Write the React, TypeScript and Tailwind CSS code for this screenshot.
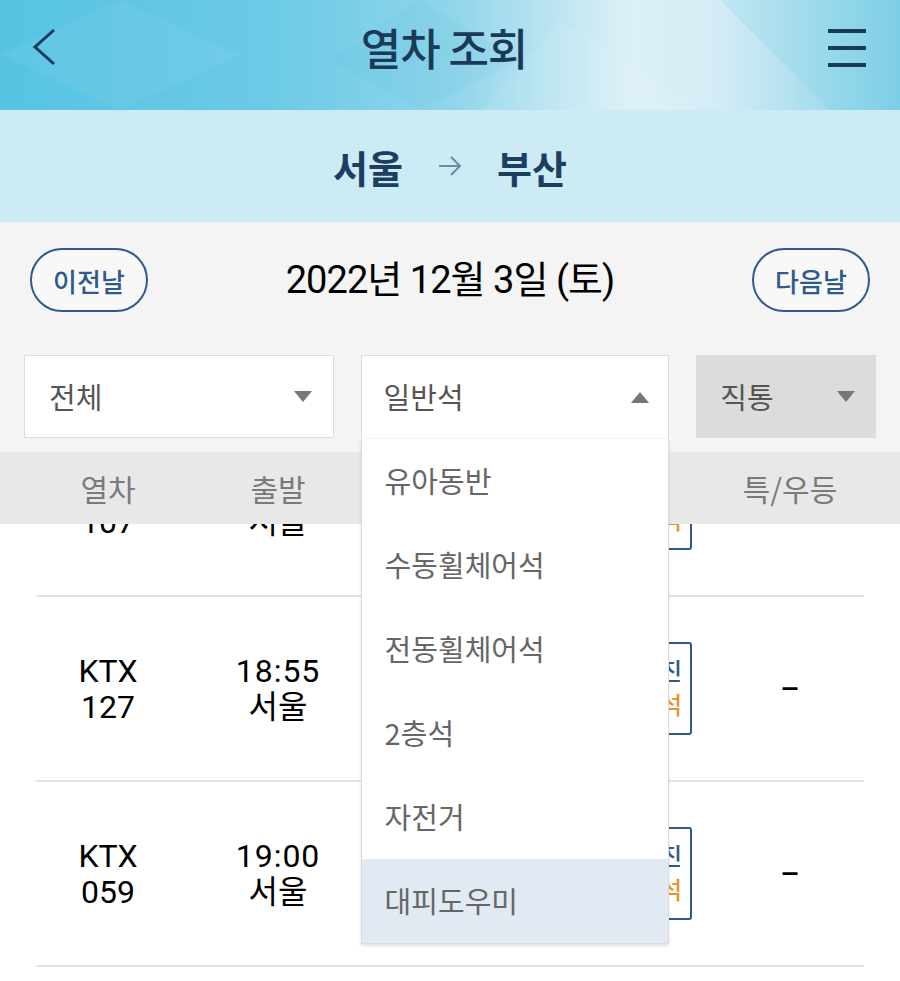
import React from "react";

const Down = ({ up = false }: { up?: boolean }) => (
  <svg width="20" height="13" viewBox="0 0 20 13" className="shrink-0">
    {up ? (
      <polygon points="10,1 19,12 1,12" fill="#777777" />
    ) : (
      <polygon points="1,1 19,1 10,12" fill="#777777" />
    )}
  </svg>
);

const seatTypes = ["유아동반", "수동휠체어석", "전동휠체어석", "2층석", "자전거", "대피도우미"];

const rows = [
  { no: "107", time: "18:50" },
  { no: "127", time: "18:55" },
  { no: "059", time: "19:00" },
  { no: "261", time: "19:20" },
];

const Row = ({ no, time }: { no: string; time: string }) => (
  <div className="mx-[36px] h-[185px] border-b-2 border-[#e3e3e3] grid grid-cols-[144px_196px_180px_160px_148px] items-center text-[32px] leading-[36px] text-black font-['Roboto','Noto_Sans_CJK_KR',sans-serif]">
    <div className="text-center">
      <div>KTX</div>
      <div>{no}</div>
    </div>
    <div className="text-center">
      <div className="tracking-[1px]">{time}</div>
      <div>서울</div>
    </div>
    <div />
    <div className="flex justify-end pr-[24px]">
      <div className="w-[124px] h-[93px] border-2 border-[#2f5a8a] rounded-[3px] flex flex-col items-end justify-center pr-[8px] text-[24px] leading-[34px] font-medium">
        <span className="text-[#2f5a8a]">매진</span>
        <span className="text-[#e8932e]">입석</span>
      </div>
    </div>
    <div className="text-center text-[30px] font-medium">–</div>
  </div>
);

export default function App() {
  return (
    <div className="w-[900px] h-[981px] overflow-hidden bg-white flex flex-col font-['Noto_Sans_CJK_KR',sans-serif]">
      {/* header */}
      <div className="relative h-[110px] shrink-0 flex items-center justify-between pl-[30px] pr-[34px] pb-[16px] bg-[linear-gradient(90deg,#56c3e3_0%,#6ccae6_30%,#8fd5ea_50%,#dcf0f7_70%,#d3ecf5_80%,#82d0e7_100%)]">
        <svg className="absolute inset-0 pointer-events-none" width="900" height="110" viewBox="0 0 900 110">
          <polygon points="120,0 240,55 120,110 0,55" fill="#ffffff" opacity="0.05" />
          <polygon points="420,0 520,60 420,110 330,60" fill="#3aa9cf" opacity="0.07" />
          <polygon points="560,20 700,110 480,110" fill="#ffffff" opacity="0.08" />
          <polygon points="720,0 900,0 900,110 830,110" fill="#5ec6e3" opacity="0.15" />
        </svg>
        <svg width="30" height="40" viewBox="0 0 30 40" className="relative">
          <polyline points="24,3 5,20 24,37" fill="none" stroke="#1b3a58" strokeWidth="3" />
        </svg>
        <h1 className="relative text-[44px] font-medium text-[#1b3a58] tracking-tight">열차 조회</h1>
        <svg width="38" height="40" viewBox="0 0 38 40" className="relative">
          <rect x="0" y="2" width="38" height="4" fill="#1b3a58" />
          <rect x="0" y="19" width="38" height="4" fill="#1b3a58" />
          <rect x="0" y="36" width="38" height="4" fill="#1b3a58" />
        </svg>
      </div>

      {/* route */}
      <div className="h-[112px] shrink-0 bg-[#cdebf4] flex items-center justify-center gap-[34px] text-[38px] font-bold text-[#1d3e5f]">
        <span>서울</span>
        <svg width="26" height="26" viewBox="0 0 26 26">
          <path d="M2 13 H23 M14 4 L23 13 L14 22" fill="none" stroke="#6e8aa3" strokeWidth="2" />
        </svg>
        <span>부산</span>
      </div>

      {/* date + filters */}
      <div className="shrink-0 bg-[#f4f4f4] px-[24px] pt-[26px] pb-[14px] relative z-10">
        <div className="flex items-center justify-between px-[6px]">
          <button className="w-[118px] h-[64px] rounded-full border-2 border-[#2f5a8a] text-[26px] font-medium text-[#2f5a8a] bg-white/40">
            이전날
          </button>
          <div className="text-[38px] text-black font-['Roboto','Noto_Sans_CJK_KR',sans-serif] tracking-tight">
            2022년 12월 3일 (토)
          </div>
          <button className="w-[118px] h-[64px] rounded-full border-2 border-[#2f5a8a] text-[26px] font-medium text-[#2f5a8a] bg-white/40">
            다음날
          </button>
        </div>

        <div className="mt-[43px] flex gap-[27px] h-[83px]">
          <div className="w-[310px] bg-white border border-[#dcdcdc] flex items-center justify-between pl-[24px] pr-[20px] text-[29px] text-[#555]">
            <span>전체</span>
            <Down />
          </div>
          <div className="relative w-[309px] bg-white border border-[#dcdcdc] border-b-0 flex items-center justify-between pl-[22px] pr-[18px] text-[29px] text-[#555]">
            <span>일반석</span>
            <Down up />
            <div className="absolute left-[-1px] right-[-1px] top-[83px] bg-white border border-t-0 border-[#dcdcdc] shadow-[0_2px_3px_rgba(0,0,0,0.12)]">
              {seatTypes.map((s, i) => (
                <div
                  key={s}
                  className={`h-[84px] flex items-center pl-[23px] text-[29px] text-[#666] ${i === seatTypes.length - 1 ? "bg-[#e1eaf3]" : ""}`}
                >
                  {s}
                </div>
              ))}
            </div>
          </div>
          <div className="w-[180px] bg-[#dcdcdc] flex items-center justify-between pl-[24px] pr-[20px] text-[29px] text-[#555]">
            <span>직통</span>
            <Down />
          </div>
        </div>
      </div>

      {/* table head */}
      <div className="shrink-0 h-[72px] bg-[#e8e8e8] px-[36px] grid grid-cols-[144px_196px_180px_160px_148px] items-center text-[30px] text-[#7a7a7a]">
        <div className="text-center">열차</div>
        <div className="text-center">출발</div>
        <div />
        <div />
        <div className="text-center">특/우등</div>
      </div>

      {/* rows */}
      <div className="flex-1 overflow-hidden">
        <div className="-mt-[112px]">
          {rows.map((r) => (
            <Row key={r.no} {...r} />
          ))}
        </div>
      </div>
    </div>
  );
}
